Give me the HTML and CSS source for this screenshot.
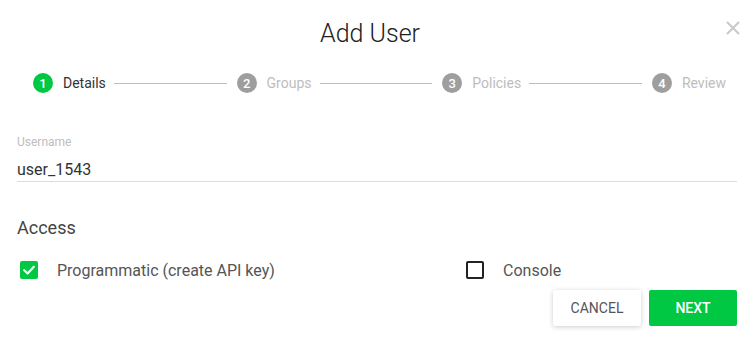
FILE: index.html
```html
<!DOCTYPE html>
<html lang="en">
<head>
    <meta charset="UTF-8">
    <meta name="viewport" content="width=device-width, initial-scale=1.0">
    <title>Add User</title>
    <link rel="stylesheet" href="styles.css">
</head>
<body>
    <div class="dialog">
        <!-- Header -->
        <div class="header">
            <h1 class="title">Add User</h1>
            <button class="close-btn" aria-label="Close">
                <svg width="14" height="14" viewBox="0 0 14 14">
                    <path d="M1 1 L13 13 M13 1 L1 13" stroke="#c9c9c9" stroke-width="2" fill="none"/>
                </svg>
            </button>
        </div>

        <div class="content">
            <!-- Stepper -->
            <div class="stepper">
                <div class="step active">
                    <span class="step-num">1</span>
                    <span class="step-label">Details</span>
                </div>
                <div class="step-line"></div>
                <div class="step">
                    <span class="step-num">2</span>
                    <span class="step-label">Groups</span>
                </div>
                <div class="step-line"></div>
                <div class="step">
                    <span class="step-num">3</span>
                    <span class="step-label">Policies</span>
                </div>
                <div class="step-line"></div>
                <div class="step">
                    <span class="step-num">4</span>
                    <span class="step-label">Review</span>
                </div>
            </div>

            <!-- Username field -->
            <div class="field">
                <label class="field-label" for="username">Username</label>
                <input class="field-input" id="username" type="text" value="user_1543">
            </div>

            <!-- Access -->
            <div class="section-title">Access</div>
            <div class="access-options">
                <label class="option">
                    <span class="checkbox checked">
                        <svg width="18" height="18" viewBox="0 0 18 18">
                            <path d="M4.2 9.2 L7.6 12.4 L13.8 5.8" stroke="#fff" stroke-width="2.2" fill="none" stroke-linecap="round" stroke-linejoin="round"/>
                        </svg>
                    </span>
                    <span class="option-label">Programmatic (create API key)</span>
                </label>
                <label class="option">
                    <span class="checkbox"></span>
                    <span class="option-label">Console</span>
                </label>
            </div>

            <!-- Actions -->
            <div class="actions">
                <button class="btn btn-cancel">Cancel</button>
                <button class="btn btn-next">Next</button>
            </div>
        </div>
    </div>
</body>
</html>
```

FILE: styles.css
```css
body {
    margin: 0;
    padding: 0;
    background: #fff;
    color: #333;
    font-family: Roboto, 'Liberation Sans', sans-serif;
}

.dialog {
    width: 749px;
    height: 339px;
    position: relative;
    overflow: hidden;
}

/* Header */
.header {
    position: relative;
    height: 60px;
    padding-top: 8px;
    box-sizing: border-box;
}

.title {
    margin: 0;
    padding-right: 9px;
    text-align: center;
    font-size: 25px;
    font-weight: 300;
    line-height: 52px;
    color: #222;
}

.close-btn {
    position: absolute;
    top: 21px;
    right: 9px;
    width: 14px;
    height: 14px;
    padding: 0;
    border: none;
    background: none;
    cursor: pointer;
    display: flex;
}

.content {
    padding: 0 12px 0 17px;
}

/* Stepper */
.stepper {
    display: flex;
    align-items: center;
    height: 20px;
    margin-top: 13px;
    padding: 0 11px 0 16px;
}

.step {
    display: flex;
    align-items: center;
    gap: 10px;
}

.step-num {
    width: 20px;
    height: 20px;
    border-radius: 50%;
    background: #9e9e9e;
    color: #fff;
    font-size: 13px;
    font-weight: 500;
    display: flex;
    align-items: center;
    justify-content: center;
}

.step-label {
    font-size: 14px;
    color: #bdbdbd;
}

.step.active .step-num {
    background: #00c843;
}

.step.active .step-label {
    color: #333;
}

.step-line {
    flex: 1;
    height: 1px;
    background: #bdbdbd;
    margin: 0 10px 0 8px;
}

/* Field */
.field {
    margin-top: 41px;
}

.field-label {
    display: block;
    font-size: 12px;
    line-height: 16px;
    color: #bdbdbd;
}

.field-input {
    display: block;
    width: 100%;
    box-sizing: border-box;
    margin-top: 7px;
    padding: 0;
    height: 25px;
    border: none;
    border-bottom: 1px solid #ddd;
    outline: none;
    font-family: inherit;
    font-size: 16px;
    line-height: 24px;
    color: #333;
    background: none;
}

/* Access */
.section-title {
    margin-top: 34px;
    font-size: 18px;
    line-height: 24px;
    color: #444;
}

.access-options {
    display: grid;
    grid-template-columns: 446px 1fr;
    margin-top: 18px;
}

.option {
    display: flex;
    align-items: center;
    height: 24px;
    padding-left: 3px;
    cursor: pointer;
}

.checkbox {
    width: 18px;
    height: 18px;
    box-sizing: border-box;
    border: 2px solid #222;
    border-radius: 2px;
    display: flex;
}

.checkbox.checked {
    border: none;
    background: #00c843;
}

.option-label {
    margin-left: 19px;
    font-size: 16px;
    color: #555;
}

/* Actions */
.actions {
    display: flex;
    justify-content: flex-end;
    gap: 8px;
    margin-top: 8px;
}

.btn {
    width: 88px;
    height: 36px;
    border: none;
    border-radius: 2px;
    font-family: inherit;
    font-size: 14px;
    text-transform: uppercase;
    cursor: pointer;
}

.btn-cancel {
    background: #fff;
    color: #555;
    box-shadow: 0 1px 5px rgba(0,0,0,0.2);
}

.btn-next {
    background: #00c843;
    color: #fff;
    font-weight: 500;
}
```
